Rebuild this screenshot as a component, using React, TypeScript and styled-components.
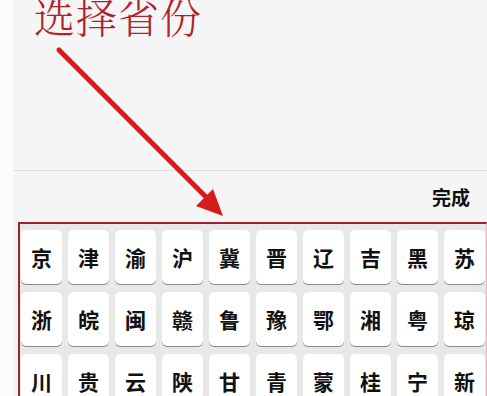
import React from "react";
import styled, { createGlobalStyle } from "styled-components";

const GlobalStyle = createGlobalStyle`
  html, body {
    margin: 0;
    padding: 0;
    background: #ffffff;
    overflow: hidden;
  }
`;

const provinces = [
  ["京", "津", "渝", "沪", "冀", "晋", "辽", "吉", "黑", "苏"],
  ["浙", "皖", "闽", "赣", "鲁", "豫", "鄂", "湘", "粤", "琼"],
  ["川", "贵", "云", "陕", "甘", "青", "蒙", "桂", "宁", "新"],
];

function App() {
  return (
    <>
      <GlobalStyle />
      <Page>
        <Gutter />
        <Main>
          <Header>
            <Title>选择省份</Title>
          </Header>
          <Toolbar>
            <Done>完成</Done>
          </Toolbar>
          <Keyboard>
            {provinces.map((row, i) => (
              <KeyRow key={i}>
                {row.map((p) => (
                  <Key key={p}>{p}</Key>
                ))}
              </KeyRow>
            ))}
          </Keyboard>
        </Main>
        {/* 안내 화살표 */}
        <Arrow width="487" height="396" viewBox="0 0 487 396">
          <line
            x1="59"
            y1="50"
            x2="208"
            y2="199"
            stroke="#d51c1c"
            strokeWidth="5"
            strokeLinecap="round"
          />
          <polygon points="223,216 196,206 213,189" fill="#d51c1c" />
        </Arrow>
      </Page>
    </>
  );
}
export default App;

const Page = styled.div`
  position: relative;
  display: flex;
  width: 487px;
  height: 396px;
  overflow: hidden;
  font-family: "Noto Sans CJK SC", "Noto Sans", sans-serif;
`;

const Gutter = styled.div`
  width: 13px;
  flex-shrink: 0;
  background: #fcfcfc;
`;

const Main = styled.div`
  flex: 1;
  display: flex;
  flex-direction: column;
  background: #f5f5f5;
`;

const Header = styled.div`
  flex-shrink: 0;
  height: 170px;
  border-bottom: 1px solid #dedede;
  padding-left: 21px;
  overflow: hidden;
`;

const Title = styled.h1`
  margin: -5px 0 0;
  font-family: "Noto Serif CJK SC", "Noto Sans CJK SC", serif;
  font-weight: 300;
  font-size: 41px;
  line-height: 1;
  letter-spacing: 1px;
  color: #b3202b;
`;

const Toolbar = styled.div`
  flex-shrink: 0;
  height: 51px;
  display: flex;
  align-items: center;
  justify-content: flex-end;
  padding-right: 17px;
`;

const Done = styled.span`
  font-size: 19px;
  font-weight: 700;
  color: #111;
`;

const Keyboard = styled.div`
  flex-shrink: 0;
  margin-left: 5px;
  border-top: 2px solid #a51f2c;
  border-left: 2px solid #a51f2c;
  border-right: 1px solid #e9b7b7;
  background: #e8e8e8;
  padding: 6px 0 8px 1px;
  display: flex;
  flex-direction: column;
  gap: 8px;
`;

const KeyRow = styled.div`
  display: grid;
  grid-template-columns: repeat(10, 41px);
  column-gap: 6px;
`;

const Key = styled.div`
  height: 54px;
  display: flex;
  align-items: center;
  justify-content: center;
  background: #ffffff;
  border-radius: 5px;
  box-shadow: 0 1px 0 #8a8a8a;
  font-size: 21px;
  font-weight: 700;
  color: #111;
`;

const Arrow = styled.svg`
  position: absolute;
  left: 0;
  top: 0;
  pointer-events: none;
`;
